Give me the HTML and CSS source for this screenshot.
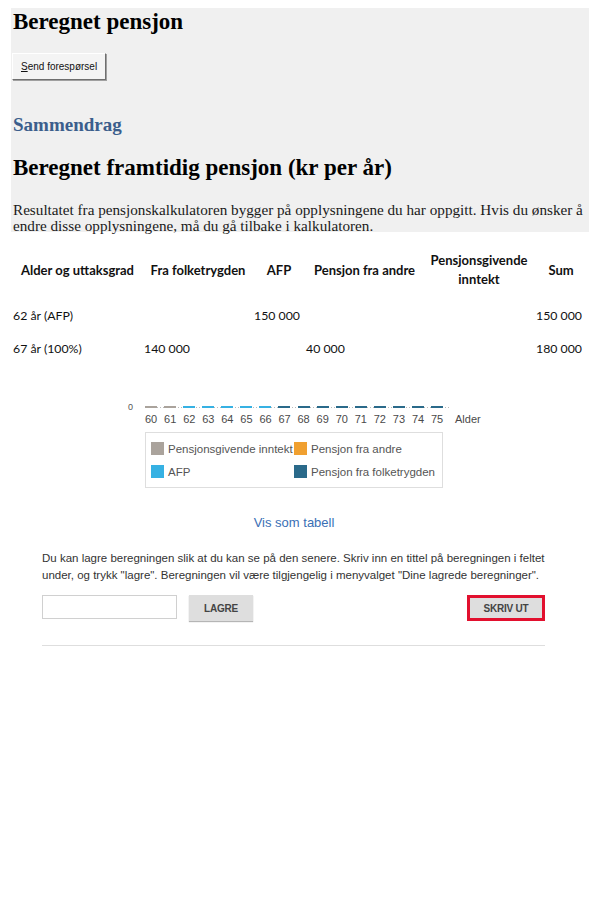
FILE: index.html
```html
<!DOCTYPE html>
<html lang="no">
<head>
<meta charset="utf-8">
<title>Beregnet pensjon</title>
<link rel="stylesheet" href="styles.css">
</head>
<body>
<section class="summary">
  <h1 class="title">Beregnet pensjon</h1>
  <button class="win-btn" type="button"><u>S</u>end forespørsel</button>
  <h2 class="subtitle">Sammendrag</h2>
  <h1 class="title second">Beregnet framtidig pensjon (kr per år)</h1>
  <p class="intro">Resultatet fra pensjonskalkulatoren bygger på opplysningene du har oppgitt. Hvis du ønsker å endre disse opplysningene, må du gå tilbake i kalkulatoren.</p>
</section>

<table class="pension">
  <colgroup>
    <col class="c1"><col class="c2"><col class="c3"><col class="c4"><col class="c5"><col class="c6">
  </colgroup>
  <thead>
    <tr>
      <th>Alder og uttaksgrad</th>
      <th>Fra folketrygden</th>
      <th>AFP</th>
      <th>Pensjon fra andre</th>
      <th>Pensjonsgivende inntekt</th>
      <th>Sum</th>
    </tr>
  </thead>
  <tbody>
    <tr>
      <td>62 år (AFP)</td><td></td><td>150 000</td><td></td><td></td><td class="num">150 000</td>
    </tr>
    <tr>
      <td>67 år (100%)</td><td>140 000</td><td></td><td>40 000</td><td></td><td class="num">180 000</td>
    </tr>
  </tbody>
</table>

<section class="chart">
  <div class="axis-row">
    <span class="zero">0</span>
    <div class="bars">
      <span class="bar grey"></span><span class="bar grey"></span>
      <span class="bar light"></span><span class="bar light"></span><span class="bar light"></span><span class="bar light"></span><span class="bar light"></span>
      <span class="bar dark"></span><span class="bar dark"></span><span class="bar dark"></span><span class="bar dark"></span><span class="bar dark"></span><span class="bar dark"></span><span class="bar dark"></span><span class="bar dark"></span><span class="bar dark"></span>
    </div>
  </div>
  <div class="labels-row">
    <div class="labels">
      <span>60</span><span>61</span><span>62</span><span>63</span><span>64</span><span>65</span><span>66</span><span>67</span><span>68</span><span>69</span><span>70</span><span>71</span><span>72</span><span>73</span><span>74</span><span>75</span>
    </div>
    <span class="alder">Alder</span>
  </div>
  <div class="legend">
    <div class="item"><span class="sw grey"></span>Pensjonsgivende inntekt</div>
    <div class="item"><span class="sw orange"></span>Pensjon fra andre</div>
    <div class="item"><span class="sw light"></span>AFP</div>
    <div class="item"><span class="sw dark"></span>Pensjon fra folketrygden</div>
  </div>
</section>
<div class="link-wrap"><a class="table-link" href="#">Vis som tabell</a></div>

<section class="save">
  <p class="save-text">Du kan lagre beregningen slik at du kan se på den senere. Skriv inn en tittel på beregningen i feltet under, og trykk "lagre". Beregningen vil være tilgjengelig i menyvalget "Dine lagrede beregninger".</p>
  <div class="save-row">
    <input class="title-input" type="text" aria-label="Tittel">
    <button class="flat-btn" type="button">LAGRE</button>
    <button class="flat-btn print" type="button">SKRIV UT</button>
  </div>
  <hr class="rule">
</section>
</body>
</html>
```

FILE: styles.css
```css
html, body {
  margin: 0;
  padding: 0;
  background: #ffffff;
}

body {
  font-family: "Liberation Serif", "Times New Roman", serif;
  color: #000;
}

.summary {
  margin: 8px 11px 0 11px;
  padding: 0 2px 0 2px;
  height: 224px;
  background: #f0f0f0;
}

.title {
  margin: 0;
  font-size: 23px;
  line-height: 28px;
  font-weight: bold;
}

.win-btn {
  display: block;
  margin: 17px 0 0 -1px;
  padding: 0 8px;
  height: 27px;
  font-family: "Liberation Sans", Arial, sans-serif;
  font-size: 10px;
  color: #111;
  background: #f4f4f4;
  border: 1px solid;
  border-color: #ffffff #6f6f6f #6f6f6f #ffffff;
  box-shadow: 1px 1px 0 #a0a0a0;
}

.subtitle {
  margin: 33px 0 0 0;
  font-size: 19px;
  line-height: 24px;
  font-weight: bold;
  color: #3b5e8c;
}

.second {
  margin-top: 17px;
}

.intro {
  margin: 20px 0 0 0;
  font-size: 15.2px;
  line-height: 16px;
  color: #1a1a1a;
}

.pension {
  margin: 17px 0 0 12px;
  border-collapse: collapse;
  table-layout: fixed;
  width: 572px;
  font-family: Lato, "Open Sans", sans-serif;
  font-size: 13px;
  color: #111;
}

.c1 { width: 131px; }
.c2 { width: 110px; }
.c3 { width: 52px; }
.c4 { width: 119px; }
.c5 { width: 110px; }
.c6 { width: 50px; }

.pension th {
  font-weight: bold;
  text-align: center;
  vertical-align: middle;
  line-height: 19px;
  height: 42px;
  padding: 0;
}

.pension th:last-child {
  padding-left: 4px;
}

.pension td {
  text-align: left;
  height: 33px;
  padding: 0 0 0 1px;
  vertical-align: middle;
  white-space: nowrap;
  font-size: 12.3px;
}

.pension tbody tr:first-child td {
  height: 33px;
  padding-top: 8px;
}

.pension td.num {
  text-align: right;
  padding-right: 2px;
}

.chart {
  margin: 36px 0 0 128px;
  font-family: "Liberation Sans", Arial, sans-serif;
  color: #444;
  font-size: 11px;
}

.axis-row {
  display: flex;
  align-items: center;
  height: 12px;
}

.zero {
  width: 17px;
  font-size: 9px;
  color: #555;
}

.bars {
  display: grid;
  grid-template-columns: repeat(16, 19.07px);
  width: 305px;
  height: 2px;
  background-image: linear-gradient(to right, #bbb 50%, transparent 50%);
  background-size: 3px 1px;
  background-repeat: repeat-x;
  background-position: 0 1px;
}

.bar {
  display: block;
  width: 12px;
  height: 2px;
}

.bar.grey { background: #aaa39c; }
.bar.light { background: #36b1e3; }
.bar.dark { background: #2a6a8a; }

.labels-row {
  display: flex;
  align-items: center;
  margin-left: 17px;
  height: 12px;
}

.labels {
  display: grid;
  grid-template-columns: repeat(16, 19.07px);
  width: 305px;
}

.labels span {
  width: 12px;
  text-align: center;
  font-size: 11px;
  color: #4a4a4a;
}

.alder {
  margin-left: 5px;
  font-size: 11px;
  color: #4a4a4a;
}

.legend {
  margin: 7px 0 0 17px;
  width: 286px;
  padding: 4px 5px;
  border: 1px solid #dedede;
  display: grid;
  grid-template-columns: 143px 143px;
}

.item {
  display: flex;
  align-items: center;
  height: 23px;
  font-size: 11.5px;
  color: #555;
}

.sw {
  display: inline-block;
  width: 13px;
  height: 13px;
  margin-right: 4px;
}

.sw.grey { background: #aaa39c; }
.sw.orange { background: #f0a030; }
.sw.light { background: #36b1e3; }
.sw.dark { background: #2a6a8a; }

.link-wrap {
  margin-top: 26px;
  padding-right: 12px;
  text-align: center;
  line-height: 15px;
}

.table-link {
  font-family: "Liberation Sans", Arial, sans-serif;
  font-size: 13px;
  color: #3a6fb5;
  text-decoration: none;
}

.save {
  margin: 20px 55px 0 42px;
  font-family: "Liberation Sans", Arial, sans-serif;
}

.save-text {
  margin: 0 -10px 0 0;
  font-size: 11.5px;
  line-height: 17px;
  color: #333;
}

.save-row {
  display: flex;
  align-items: flex-start;
  margin-top: 11px;
}

.title-input {
  width: 135px;
  height: 24px;
  box-sizing: border-box;
  border: 1px solid #d0d0d0;
  margin: 0;
  padding: 0;
  background: #fff;
}

.flat-btn {
  margin: 0 0 0 12px;
  width: 64px;
  height: 26px;
  background: #dedede;
  border: none;
  box-shadow: 0 1px 1px #b5b5b5;
  font-family: "Liberation Sans", Arial, sans-serif;
  font-size: 10px;
  font-weight: bold;
  color: #444;
  padding: 0;
  letter-spacing: -0.2px;
}

.flat-btn.print {
  margin-left: auto;
  width: 78px;
  border: 3px solid #e2102e;
  box-shadow: none;
}

.rule {
  margin: 24px 0 0 0;
  border: none;
  border-top: 1px solid #dedede;
  height: 0;
}
```
